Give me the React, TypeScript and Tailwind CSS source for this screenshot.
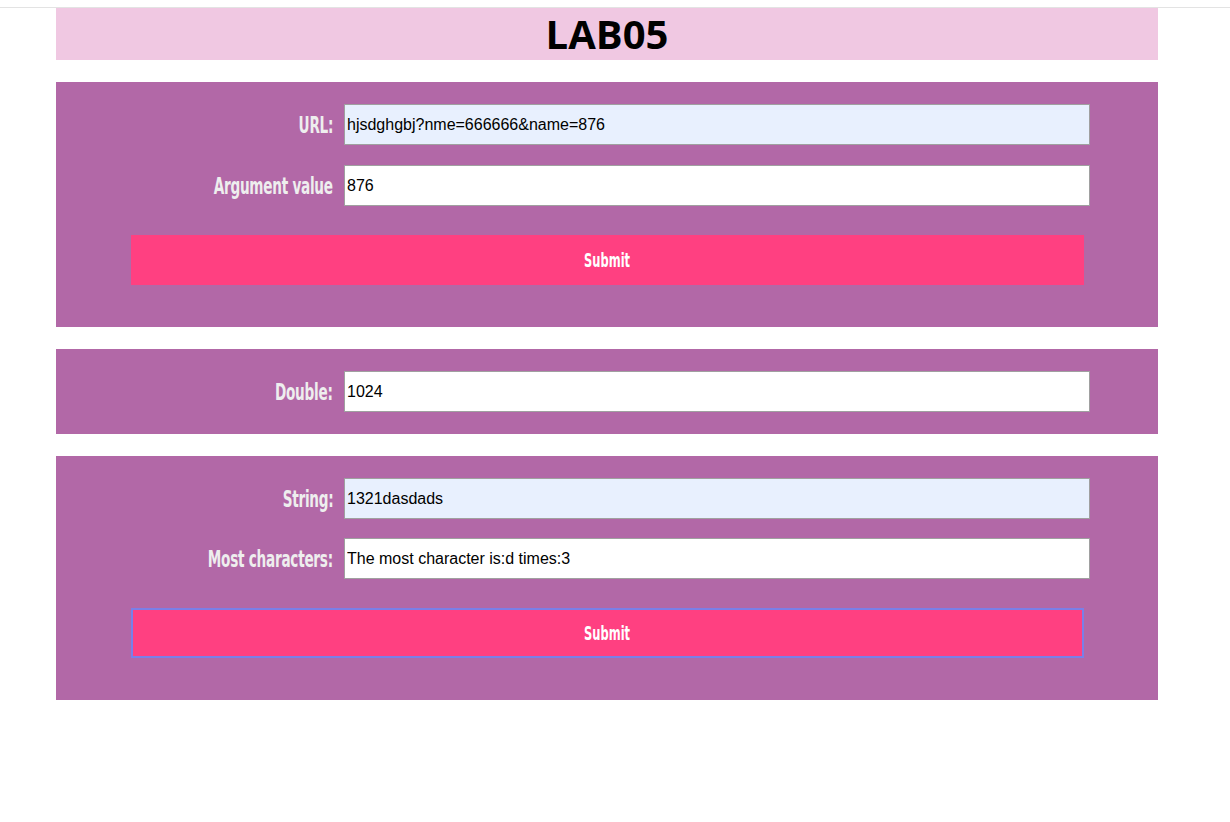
import React from 'react';

// Oswald-like condensed label face
const condensed = 'font-["DejaVu_Sans",sans-serif] font-stretch-condensed';

function Row({ label, value, autofill }: { label: string; value: string; autofill?: boolean }) {
  return (
    <div className="flex items-center">
      <div className="w-[288px] pr-[11px] text-right">
        <span className={`inline-block origin-right scale-x-[0.84] scale-y-[1.25] text-[18px] font-bold tracking-[-0.3px] text-[#eeeeee] ${condensed}`}>
          {label}
        </span>
      </div>
      <input
        type="text"
        readOnly
        value={value}
        className={`w-[746px] h-[41px] border border-[#a0a0a0] px-[2px] text-[16px] text-black font-['Liberation_Sans',Arial,sans-serif] outline-none ${
          autofill ? 'bg-[#e8f0fe]' : 'bg-white'
        }`}
      />
    </div>
  );
}

function SubmitButton({ focused }: { focused?: boolean }) {
  return (
    <button
      type="button"
      className={`ml-[75px] w-[953px] h-[50px] bg-[#ff4081] text-white ${
        focused ? 'border-2 border-[#7a7fe8]' : ''
      }`}
    >
      <span className={`inline-block scale-y-[1.25] scale-x-[0.85] text-[15px] font-bold ${condensed}`}>Submit</span>
    </button>
  );
}

export default function App() {
  return (
    <div className="min-h-[822px] bg-white border-t border-[#e3e3e3] mt-[7px]">
      <div className="ml-[56px] w-[1102px]">
        <div className="h-[52px] bg-[#f0c8e2] flex items-center justify-center">
          <h1 className="text-[40px] font-bold text-black leading-none font-['Open_Sans',sans-serif]">LAB05</h1>
        </div>

        <div className="mt-[22px] bg-[#b268a7] pt-[22px] pb-[42px] flex flex-col">
          <div className="flex flex-col gap-[20px]">
            <Row label="URL:" value="hjsdghgbj?nme=666666&name=876" autofill />
            <Row label="Argument value" value="876" />
          </div>
          <div className="mt-[29px]">
            <SubmitButton />
          </div>
        </div>

        <div className="mt-[22px] bg-[#b268a7] pt-[22px] pb-[22px]">
          <Row label="Double:" value="1024" />
        </div>

        <div className="mt-[22px] bg-[#b268a7] pt-[22px] pb-[42px] flex flex-col">
          <div className="flex flex-col gap-[19px]">
            <Row label="String:" value="1321dasdads" autofill />
            <Row label="Most characters:" value="The most character is:d times:3" />
          </div>
          <div className="mt-[29px]">
            <SubmitButton focused />
          </div>
        </div>
      </div>
    </div>
  );
}
